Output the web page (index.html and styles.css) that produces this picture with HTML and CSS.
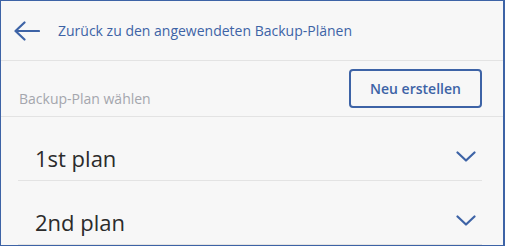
FILE: index.html
```html
<!DOCTYPE html>
<html lang="de">
<head>
    <meta charset="UTF-8">
    <title>Backup-Plan wählen</title>
    <link rel="stylesheet" href="styles.css">
</head>
<body>

<div class="panel">
    <!-- Back link -->
    <header class="back-bar">
        <svg class="back-arrow" width="26" height="20" viewBox="0 0 26 20">
            <path d="M1.5 10 H25 M10.5 1.5 L1.5 10 L10.5 18.5" fill="none" stroke="#3d63a6" stroke-width="2.2" stroke-linecap="round" stroke-linejoin="round"/>
        </svg>
        <span class="back-text">Zurück zu den angewendeten Backup-Plänen</span>
    </header>

    <!-- Plan chooser -->
    <div class="choose-bar">
        <span class="choose-label">Backup-Plan wählen</span>
        <button class="new-btn">Neu erstellen</button>
    </div>

    <ul class="plan-list">
        <li class="plan-item">
            <span>1st plan</span>
            <svg class="chevron" width="20" height="11" viewBox="0 0 20 11">
                <path d="M1.5 1.5 L10 9.5 L18.5 1.5" fill="none" stroke="#3d63a6" stroke-width="2.2" stroke-linecap="round" stroke-linejoin="round"/>
            </svg>
        </li>
        <li class="plan-item">
            <span>2nd plan</span>
            <svg class="chevron" width="20" height="11" viewBox="0 0 20 11">
                <path d="M1.5 1.5 L10 9.5 L18.5 1.5" fill="none" stroke="#3d63a6" stroke-width="2.2" stroke-linecap="round" stroke-linejoin="round"/>
            </svg>
        </li>
    </ul>
</div>

</body>
</html>
```

FILE: styles.css
```css
/* Global styles */
html, body {
    margin: 0;
    padding: 0;
}

body {
    font-family: "Open Sans", "Noto Sans", Arial, sans-serif;
    background-color: #f7f7f7;
}

.panel {
    box-sizing: border-box;
    width: 505px;
    height: 246px;
    border: 1px solid #3d63a6;
    border-right-width: 2px;
    overflow: hidden;
    background-color: #f7f7f7;
}

/* Back link */
.back-bar {
    display: flex;
    align-items: center;
    height: 59px;
    padding-left: 13px;
    border-bottom: 1px solid #e3e3e3;
}

.back-arrow {
    display: block;
    margin-right: 18px;
}

.back-text {
    font-size: 14px;
    color: #3d63a6;
}

/* Chooser row */
.choose-bar {
    display: flex;
    justify-content: space-between;
    height: 55px;
    padding: 0 21px 0 18px;
    border-bottom: 1px solid #e3e3e3;
}

.choose-label {
    align-self: flex-end;
    margin-bottom: 8px;
    font-size: 14px;
    color: #a4a6ad;
}

.new-btn {
    margin-top: 8px;
    width: 133px;
    height: 39px;
    font-family: inherit;
    font-size: 14px;
    font-weight: 600;
    color: #3d63a6;
    background-color: #f7f7f7;
    border: 2px solid #3d63a6;
    border-radius: 4px;
    cursor: pointer;
}

/* Plan list */
.plan-list {
    list-style: none;
    margin: 0 21px 0 17px;
    padding: 0;
}

.plan-item {
    display: flex;
    justify-content: space-between;
    align-items: center;
    padding: 30px 6px 11px 17px;
    font-size: 22px;
    line-height: 22px;
    color: #2b2b2b;
    border-bottom: 1px solid #e3e3e3;
}

.chevron {
    display: block;
    margin-top: -4px;
}
```
